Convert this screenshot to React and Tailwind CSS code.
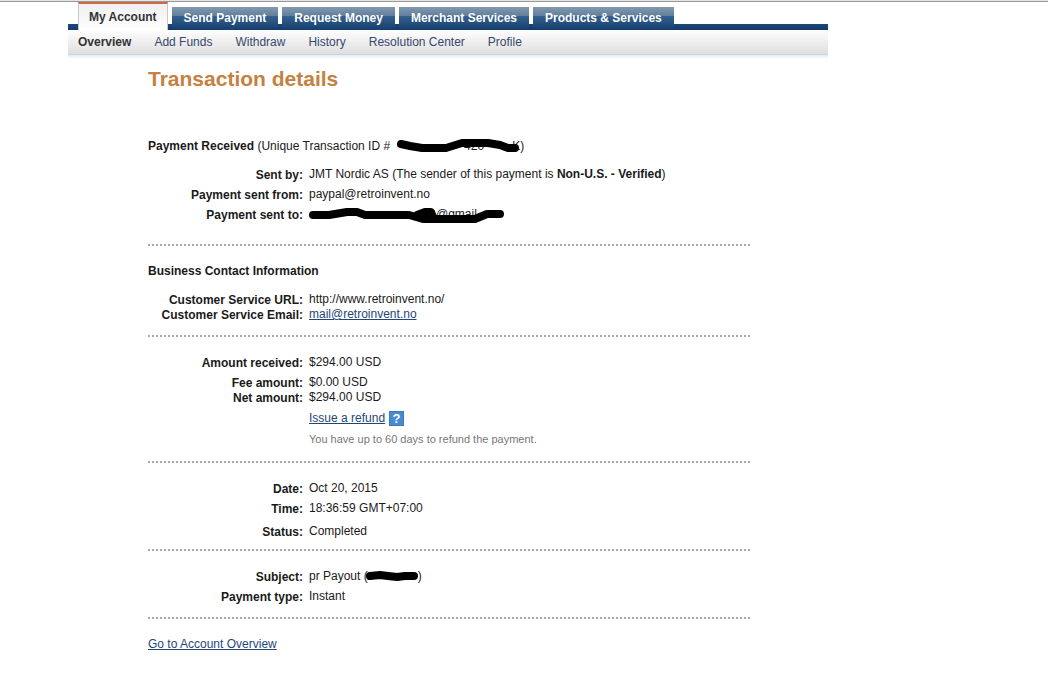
import clsx from "clsx"

const tabs = ["Send Payment", "Request Money", "Merchant Services", "Products & Services"]

const subLinks = ["Add Funds", "Withdraw", "History", "Resolution Center", "Profile"]

const Header = () => (
  <header className="ml-[68px] max-w-[760px]">
    <nav
      aria-label="Main"
      className="flex h-7 items-end gap-1 pl-[10px] bg-[linear-gradient(#19457a,#143c68)] bg-[length:100%_6px] bg-bottom bg-no-repeat"
    >
      <a
        href="#account"
        className="h-7 px-[10px] border-x border-[#c8c8c8] border-t-2 border-t-[#cc6a42] bg-linear-to-b from-[#efefef] to-white font-bold leading-[26px] text-[#333]"
      >
        My Account
      </a>
      {tabs.map((tab) => (
        <a
          key={tab}
          href="#tab"
          className="h-[23px] px-3 bg-[linear-gradient(#8499af,#5f7d9c_40%,#34608f_41%,#143e6c)] font-bold leading-[22px] text-white"
        >
          {tab}
        </a>
      ))}
    </nav>
    <nav
      aria-label="Account"
      className="flex h-[25px] gap-[23px] pl-[10px] border-b border-[#c9d3de] bg-linear-to-b from-white to-[#dedede] leading-6 text-[#36486b]"
    >
      <a href="#overview" className="font-bold text-[#333]">Overview</a>
      {subLinks.map((link) => (
        <a key={link} href="#sub">{link}</a>
      ))}
    </nav>
    <div className="h-1 bg-linear-to-b from-[#e3ebf5] to-white" />
  </header>
)

const Divider = ({ className }) => (
  <hr
    className={clsx(
      "h-0.5 border-0 bg-[repeating-linear-gradient(90deg,#aaa_0_2px,transparent_2px_4px)]",
      className
    )}
  />
)

const Row = ({ label, className, children }) => (
  <div className={clsx("flex gap-1.5", className)}>
    <dt className="w-[155px] shrink-0 text-right font-bold leading-[15px]">{label}</dt>
    <dd className="leading-[13px]">{children}</dd>
  </div>
)

// Marker strokes laid over private values
const Marker = ({ width, height, className, children }) => (
  <svg
    width={width}
    height={height}
    viewBox={`0 0 ${width} ${height}`}
    fill="#000"
    stroke="#000"
    strokeWidth="8"
    strokeLinecap="round"
    strokeLinejoin="round"
    aria-hidden="true"
    className={className}
  >
    {children}
  </svg>
)

const App = () => {
  return (
    <div className="bg-white pb-9 font-['Liberation_Sans',Arial,sans-serif] text-xs text-[#1a1a1a]">
      <div className="h-0.5 border-b border-[#999] bg-[#e4e4e4]" />
      <Header />

      <main className="ml-[148px] max-w-[602px] leading-[15px]">
        <h1 className="pt-[7px] text-[21px] font-bold leading-[26px] text-[#c58141]">Transaction details</h1>

        <p className="mt-[47px] flex">
          <span>
            <b>Payment Received</b> (Unique Transaction ID #
          </span>
          <span className="relative ml-1.5 flex w-[124px] justify-end gap-7">
            <span>420</span>
            <span>K</span>
            <Marker width="124" height="15" className="absolute top-0 left-0">
              <path fill="none" d="M5 5 L14 7 L26 9 H50 L66 4 H92 L104 6 L112 9 H119" />
            </Marker>
          </span>
          <span>)</span>
        </p>

        <dl className="mt-[14px]">
          <Row label="Sent by:">
            JMT Nordic AS (The sender of this payment is <b>Non-U.S. - Verified</b>)
          </Row>
          <Row label="Payment sent from:" className="mt-[5px]">paypal@retroinvent.no</Row>
          <Row label="Payment sent to:" className="mt-[5px]">
            <span className="relative block w-[196px] pl-[127px]">
              @gmail
              <Marker width="196" height="18" className="absolute top-0 left-0">
                <path fill="none" d="M4 7 L20 7 L38 4 H48 L56 7 H100 L114 11 H166 L178 6 H191" />
                <path d="M108 7 L116 4 H122 L124 9 Z" />
              </Marker>
            </span>
          </Row>
        </dl>
        <Divider className="mt-[21px]" />

        <h2 className="mt-[18px] font-bold">Business Contact Information</h2>
        <dl className="mt-[14px]">
          <Row label="Customer Service URL:">http://www.retroinvent.no/</Row>
          <Row label="Customer Service Email:">
            <a href="mailto:mail@retroinvent.no" className="text-[#1f4678] underline">mail@retroinvent.no</a>
          </Row>
        </dl>
        <Divider className="mt-3" />

        <dl className="mt-[19px]">
          <Row label="Amount received:">$294.00 USD</Row>
          <Row label="Fee amount:" className="mt-[5px]">$0.00 USD</Row>
          <Row label="Net amount:">$294.00 USD</Row>
        </dl>
        <div className="mt-[5px] ml-[161px] flex items-center gap-1">
          <a href="#refund" className="text-[#1f4678] underline">Issue a refund</a>
          <button
            type="button"
            aria-label="Refund help"
            className="size-[15px] border border-[#3b78b8] bg-[#4a8ad0] text-[13px] font-bold leading-[13px] text-white"
          >
            ?
          </button>
        </div>
        <p className="mt-1.5 ml-[161px] text-[11px] text-[#777]">You have up to 60 days to refund the payment.</p>
        <Divider className="mt-[14px]" />

        <dl className="mt-[19px]">
          <Row label="Date:">Oct 20, 2015</Row>
          <Row label="Time:" className="mt-[5px]">18:36:59 GMT+07:00</Row>
          <Row label="Status:" className="mt-2">Completed</Row>
        </dl>
        <Divider className="mt-[9px]" />

        <dl className="mt-[19px]">
          <Row label="Subject:">
            <span className="flex">
              pr Payout (
              <Marker width="52" height="13" className="-ml-0.5">
                <path fill="none" d="M4 6 L14 5 L22 6 L31 7 L39 6 L48 6" />
              </Marker>
              )
            </span>
          </Row>
          <Row label="Payment type:" className="mt-[5px]">Instant</Row>
        </dl>
        <Divider className="mt-3" />

        <a href="#overview" className="mt-[18px] inline-block text-[#1f4678] underline">Go to Account Overview</a>
      </main>
    </div>
  )
}

export default App
